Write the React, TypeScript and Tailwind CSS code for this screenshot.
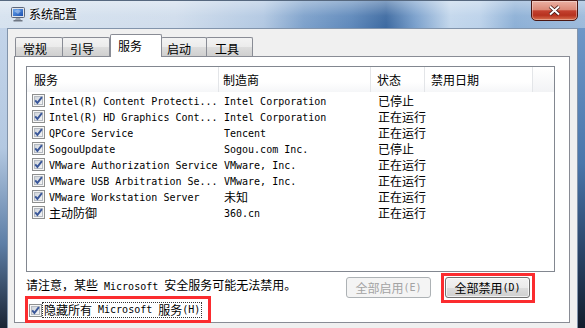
import React from "react";

const CJK_RE = /([\u3000-\u303f\u4e00-\u9fff\uff00-\uffef]+)/;

function T({ s }: { s: string }) {
  const parts = s.split(CJK_RE).filter((p) => p !== "");
  return (
    <>
      {parts.map((p, i) =>
        CJK_RE.test(p) ? (
          <span key={i} className="font-['Noto_Sans_CJK_SC',sans-serif] text-[12px]">
            {p}
          </span>
        ) : (
          <span key={i} className="font-['DejaVu_Sans_Mono',monospace] text-[10px] whitespace-pre">
            {p}
          </span>
        )
      )}
    </>
  );
}

function Check() {
  return (
    <svg width="13" height="13" viewBox="0 0 13 13" className="shrink-0 block">
      <defs>
        <linearGradient id="cbg" x1="0" y1="0" x2="1" y2="1">
          <stop offset="0" stopColor="#cdd2d9" />
          <stop offset="1" stopColor="#f7f7f7" />
        </linearGradient>
      </defs>
      <rect x="0.5" y="0.5" width="12" height="12" fill="#f6f6f6" stroke="#8e8f8f" />
      <rect x="2.5" y="2.5" width="8" height="8" fill="url(#cbg)" stroke="#b5bac1" strokeWidth="1" />
      <path d="M3.2 6.4 L5.4 8.9 L9.9 3.2" fill="none" stroke="#3a5799" strokeWidth="1.9" />
    </svg>
  );
}

function Icon() {
  return (
    <svg width="16" height="16" viewBox="0 0 16 16" className="block shrink-0">
      <defs>
        <linearGradient id="scr" x1="0" y1="0" x2="1" y2="1">
          <stop offset="0" stopColor="#6aa6ee" />
          <stop offset="1" stopColor="#1a4fb0" />
        </linearGradient>
      </defs>
      <rect x="1.5" y="1.5" width="13" height="10" rx="1" fill="#dfe3ea" stroke="#5c667a" />
      <rect x="3" y="3" width="10" height="7" fill="url(#scr)" />
      <path d="M4 5 L8 3.5 L11 5 L8 8 Z" fill="#ffffff" opacity="0.35" />
      <path d="M6 12 h4 l1 2 H5 z" fill="#9ba2ad" />
      <rect x="3.5" y="14" width="9" height="1.5" fill="#6f7784" />
    </svg>
  );
}

const rows: [string, string, string][] = [
  ["Intel(R) Content Protecti...", "Intel Corporation", "已停止"],
  ["Intel(R) HD Graphics Cont...", "Intel Corporation", "正在运行"],
  ["QPCore Service", "Tencent", "正在运行"],
  ["SogouUpdate", "Sogou.com Inc.", "已停止"],
  ["VMware Authorization Service", "VMware, Inc.", "正在运行"],
  ["VMware USB Arbitration Se...", "VMware, Inc.", "正在运行"],
  ["VMware Workstation Server", "未知", "正在运行"],
  ["主动防御", "360.cn", "正在运行"],
];

const tabs = [
  { label: "常规", w: "w-[48px]", pl: "pl-[7px]", first: true },
  { label: "引导", w: "w-[48px]", pl: "pl-[7px]" },
  { label: "服务", w: "w-[52px]", pl: "pl-[7px]", sel: true },
  { label: "启动", w: "w-[46px]", pl: "pl-[5px]" },
  { label: "工具", w: "w-[47px]", pl: "pl-[8px]" },
];

export default function App() {
  return (
    <div className="relative w-[585px] h-[328px] overflow-hidden flex flex-col bg-[#9fb8d6] text-black">
      {/* Title bar */}
      <div className="relative h-[28px] shrink-0 border-t border-[#56687f] bg-[linear-gradient(90deg,#d6e2ef_0%,#d0ddec_30%,#b2c8e2_45%,#7da1cb_52%,#5f89bb_60%,#3d6aa1_66%,#7aa0cc_71%,#c3d7ec_77%,#bcd2ea_82%,#8db0d6_88%,#9dbadb_100%)]">
        <div className="absolute inset-0 bg-[linear-gradient(180deg,rgba(255,255,255,0.35)_0%,rgba(255,255,255,0.05)_55%,rgba(255,255,255,0)_100%)]" />
        <div className="relative flex items-center h-full pl-[10px] gap-[3px] pb-[1px]">
          <Icon />
          <span className="font-['Noto_Sans_CJK_SC',sans-serif] text-[12px] leading-[16px] [text-shadow:0_0_6px_#ffffff,0_0_3px_#ffffff]">
            系统配置
          </span>
        </div>
        <div className="absolute top-[-1px] right-[7px] w-[47px] h-[21px] rounded-b-[5px] border border-[#4a1611] bg-[linear-gradient(180deg,#eab0a3_0%,#dc8a78_45%,#c4412f_52%,#b6321f_75%,#d8704f_100%)] shadow-[inset_0_0_0_1px_rgba(255,255,255,0.35)] flex items-center justify-center">
          <svg width="13" height="11" viewBox="0 0 13 11" className="block">
            <path d="M2 1.5 L11 9.5 M11 1.5 L2 9.5" stroke="#3b1410" strokeWidth="3.6" />
            <path d="M2 1.5 L11 9.5 M11 1.5 L2 9.5" stroke="#ffffff" strokeWidth="2" />
          </svg>
        </div>
      </div>

      <div className="flex flex-1 min-h-0">
        {/* left frame */}
        <div className="w-[7px] shrink-0 bg-[linear-gradient(180deg,#c3d4e9_0%,#b3c8e1_40%,#5d7ea6_72%,#1a2434_100%)]" />
        {/* client */}
        <div className="w-[571px] shrink-0 bg-[#f0f0f0] border-l border-r border-t border-[#8294ab] pt-[5px] pl-[6px]">
          <div className="w-[556px]">
            {/* tab strip */}
            <div className="flex items-end h-[22px] pl-px">
              {tabs.map((t) =>
                t.sel ? (
                  <div
                    key={t.label}
                    className={`${t.w} ${t.pl} relative z-10 h-[23px] -mb-px bg-white border border-b-0 border-[#898c95] rounded-t-[2px] flex items-start pt-[3px]`}
                  >
                    <span className="font-['Noto_Sans_CJK_SC',sans-serif] text-[12px] leading-[16px]">{t.label}</span>
                  </div>
                ) : (
                  <div
                    key={t.label}
                    className={`${t.w} ${t.pl} ${t.first ? "" : "-ml-px"} h-[19px] border border-b-0 border-[#898c95] rounded-t-[2px] bg-[linear-gradient(180deg,#f3f3f3_0%,#ebebeb_50%,#dddddd_51%,#cfcfcf_100%)] flex items-start pt-[3px]`}
                  >
                    <span className="font-['Noto_Sans_CJK_SC',sans-serif] text-[12px] leading-[16px]">{t.label}</span>
                  </div>
                )
              )}
            </div>
            {/* panel */}
            <div className="h-[267px] bg-white border border-[#898c95] pt-[9px] pl-[11px]">
              {/* list */}
              <div className="w-[529px] h-[206px] border border-[#828790] bg-white flex flex-col">
                <div className="h-[25px] flex bg-[linear-gradient(180deg,#ffffff_0%,#ffffff_60%,#f5f6f8_100%)]">
                  <div className="w-[192px] pl-[7px] flex items-center border-r border-[#e3e5e8] leading-[16px]">
                    <T s="服务" />
                  </div>
                  <div className="w-[152px] pl-[4px] flex items-center border-r border-[#e3e5e8] leading-[16px]">
                    <T s="制造商" />
                  </div>
                  <div className="w-[54px] pl-[6px] flex items-center border-r border-[#e3e5e8] leading-[16px]">
                    <T s="状态" />
                  </div>
                  <div className="w-[108px] pl-[6px] flex items-center border-r border-[#e3e5e8] leading-[16px]">
                    <T s="禁用日期" />
                  </div>
                  <div className="flex-1 bg-[linear-gradient(180deg,#ffffff_0%,#f2f3f5_100%)]" />
                </div>
                {rows.map((r, i) => (
                  <div key={i} className="h-[16px] flex items-center leading-[16px]">
                    <div className="w-[192px] pl-[5px] flex items-center gap-[4px]">
                      <Check />
                      <span className="whitespace-pre">
                        <T s={r[0]} />
                      </span>
                    </div>
                    <div className="w-[152px] pl-[5px] whitespace-pre">
                      <T s={r[1]} />
                    </div>
                    <div className="w-[54px] pl-[7px] whitespace-pre">
                      <T s={r[2]} />
                    </div>
                  </div>
                ))}
              </div>

              {/* note + buttons */}
              <div className="w-[529px] flex items-start justify-between pr-[25px]">
                <div className="mt-[4px] leading-[16px] whitespace-pre">
                  <T s="请注意，某些 Microsoft 安全服务可能无法禁用。" />
                </div>
                <div className="mt-[5px] flex gap-[14px]">
                  <div className="w-[85px] h-[21px] rounded-[3px] border border-[#adb2b5] bg-[#f4f4f4] text-[#a3a3a3] flex items-center justify-center leading-[16px] whitespace-pre">
                    <T s="全部启用(E)" />
                  </div>
                  <div className="relative">
                    <div className="w-[85px] h-[21px] rounded-[3px] border border-[#707070] bg-[linear-gradient(180deg,#f2f2f2_0%,#ebebeb_50%,#dddddd_51%,#cfcfcf_100%)] shadow-[inset_0_0_0_1px_rgba(255,255,255,0.7)] flex items-center justify-center leading-[16px] whitespace-pre">
                      <T s="全部禁用(D)" />
                    </div>
                    <div className="absolute left-[-4px] top-[-4px] w-[94px] h-[30px] border-[3px] border-[#fb2c2f]" />
                  </div>
                </div>
              </div>

              {/* hide MS checkbox */}
              <div className="relative mt-[4px] h-[16px] flex items-center">
                <div className="ml-[3px]">
                  <Check />
                </div>
                <span className="ml-0 h-[16px] border border-dotted border-[#333] px-px flex items-center leading-[14px] whitespace-pre">
                  <T s="隐藏所有 Microsoft 服务(H)" />
                </span>
                <div className="absolute left-[-1px] top-[-6px] w-[186px] h-[27px] border-[3px] border-[#fb2c2f]" />
              </div>
            </div>
          </div>
        </div>
        {/* right frame */}
        <div className="flex-1 bg-[linear-gradient(180deg,#6f97c8_0%,#4a76ab_45%,#2a4367_75%,#121c2c_100%)]" />
      </div>
    </div>
  );
}
